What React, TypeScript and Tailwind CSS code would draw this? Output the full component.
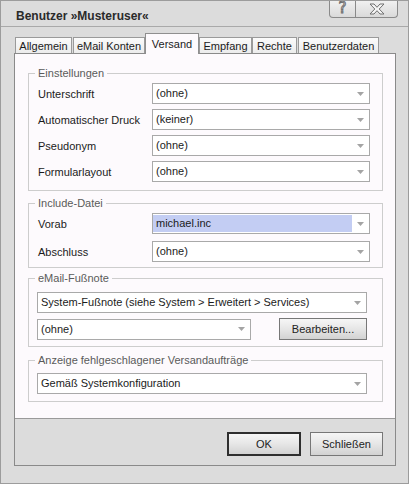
import React from "react";

function Arrow() {
  return (
    <svg width="7" height="4" viewBox="0 0 7 4" className="shrink-0">
      <path d="M0 0H7L3.5 4Z" fill="#a4a4a4" />
    </svg>
  );
}

function Select({ text, className = "", highlight = false }: { text: string; className?: string; highlight?: boolean }) {
  return (
    <div className={`h-[21px] border border-[#a9a9a9] bg-white flex items-center ${className}`}>
      {highlight ? (
        <div className="flex-1 h-[17px] bg-[#c3cdf3] flex items-center pl-[3px] whitespace-nowrap overflow-hidden">{text}</div>
      ) : (
        <div className="flex-1 flex items-center pl-[3px] whitespace-nowrap overflow-hidden">{text}</div>
      )}
      <div className="w-[17px] flex justify-center items-center">
        <Arrow />
      </div>
    </div>
  );
}

function Group({ label, className = "", children }: { label: string; className?: string; children: React.ReactNode }) {
  return (
    <div className={`relative border border-[#cdcdcd] ${className}`}>
      <span className="absolute left-[6px] top-[-8px] bg-[#fdfafd] px-[3px] leading-[14px] text-[#5a5a5a]">{label}</span>
      {children}
    </div>
  );
}

function Row({ label, value, highlight = false }: { label: string; value: string; highlight?: boolean }) {
  return (
    <div className="flex items-center">
      <div className="w-[114px] leading-[14px]">{label}</div>
      <Select text={value} highlight={highlight} className="w-[218px]" />
    </div>
  );
}

function Tab({ label, selected = false, className = "" }: { label: string; selected?: boolean; className?: string }) {
  if (selected) {
    return (
      <div
        className={`h-[21px] -mb-[1px] relative z-10 border-t border-l border-r border-[#8f8f8f] bg-[#fdfafd] flex items-start justify-center pt-[3px] leading-[14px] ${className}`}
      >
        {label}
      </div>
    );
  }
  return (
    <div
      className={`h-[16px] border-t border-l border-r border-[#9a9a9a] bg-gradient-to-b from-[#fbfbfb] to-[#ececec] flex items-center justify-center leading-[14px] ${className}`}
    >
      {label}
    </div>
  );
}

function Btn({ label, className = "", isDefault = false }: { label: string; className?: string; isDefault?: boolean }) {
  return (
    <div
      className={`flex items-center justify-center bg-gradient-to-b from-[#f6f6f6] via-[#e6e6e6] to-[#d2d2d2] text-[#222] ${
        isDefault ? "border-2 border-[#2e2e2e]" : "border border-[#777]"
      } ${className}`}
    >
      {label}
    </div>
  );
}

export default function App() {
  return (
    <div className="w-[409px] h-[484px] bg-[#dcdcdc] border border-[#9c9c9c] font-['Liberation_Sans',Arial,sans-serif] text-[11px] text-[#1b1b1b] flex flex-col overflow-hidden">
      {/* title bar */}
      <div className="h-[26px] border-b border-[#a9a9a9] flex items-start shrink-0">
        <div className="pl-[15px] pt-[8px] text-[12px] font-bold leading-[14px] text-[#2a2a2a]">Benutzer »Musteruser«</div>
        <div className="ml-auto mr-[10px] -mt-[1px] flex">
          <div className="w-[27px] h-[18px] border border-t-0 border-[#8a8a8a] rounded-bl-[4px] bg-gradient-to-b from-[#f2f2f2] to-[#dadada] flex items-center justify-center text-[15px] leading-none text-[#f4f4f4] [-webkit-text-stroke:1px_#6e6e6e] font-['DejaVu_Sans',sans-serif]">
            ?
          </div>
          <div className="w-[42px] h-[18px] border border-t-0 border-l-0 border-[#8a8a8a] rounded-br-[4px] bg-gradient-to-b from-[#f2f2f2] to-[#dadada] flex items-center justify-center">
            <svg width="16" height="12" viewBox="0 0 16 12">
              <path
                d="M1 1H5L8 4.3L11 1H15L10.2 6L15 11H11L8 7.7L5 11H1L5.8 6Z"
                fill="#f6f6f6"
                stroke="#707070"
                strokeWidth="1"
                strokeLinejoin="round"
              />
            </svg>
          </div>
        </div>
      </div>

      {/* tabs */}
      <div className="h-[26px] flex items-end pl-[14px] shrink-0">
        <Tab label="Allgemein" className="w-[57px]" />
        <Tab label="eMail Konten" className="w-[72px] ml-[1px]" />
        <Tab label="Versand" selected className="w-[54px]" />
        <Tab label="Empfang" className="w-[53px]" />
        <Tab label="Rechte" className="w-[45px]" />
        <Tab label="Benutzerdaten" className="w-[81px] ml-[1px]" />
      </div>

      {/* panel */}
      <div className="ml-[13px] mr-[12px] border border-[#8a8a8a] flex flex-col">
        <div className="h-[365px] bg-[#fdfafd] border-b border-[#9a9a9a] flex flex-col pl-[13px] pr-[12px]">
          <Group label="Einstellungen" className="mt-[19px] pt-[9px] pb-[8px] pl-[9px] flex flex-col gap-[5px]">
            <Row label="Unterschrift" value="(ohne)" />
            <Row label="Automatischer Druck" value="(keiner)" />
            <Row label="Pseudonym" value="(ohne)" />
            <Row label="Formularlayout" value="(ohne)" />
          </Group>
          <Group label="Include-Datei" className="mt-[12px] pt-[9px] pb-[5px] pl-[9px] flex flex-col gap-[7px]">
            <Row label="Vorab" value="michael.inc" highlight />
            <Row label="Abschluss" value="(ohne)" />
          </Group>
          <Group label="eMail-Fußnote" className="mt-[10px] pt-[13px] pb-[6px] pl-[8px] pr-[15px] flex flex-col gap-[5px]">
            <Select text="System-Fußnote (siehe System > Erweitert > Services)" />
            <div className="flex items-center">
              <Select text="(ohne)" className="w-[214px]" />
              <Btn label="Bearbeiten..." className="ml-auto w-[88px] h-[22px]" />
            </div>
          </Group>
          <Group label="Anzeige fehlgeschlagener Versandaufträge" className="mt-[13px] pt-[12px] pb-[7px] pl-[8px] pr-[15px]">
            <Select text="Gemäß Systemkonfiguration" />
          </Group>
        </div>
        <div className="h-[46px] flex justify-end items-start pt-[13px] pr-[12px] gap-[9px]">
          <Btn label="OK" isDefault className="w-[74px] h-[24px]" />
          <Btn label="Schließen" className="w-[73px] h-[24px]" />
        </div>
      </div>
    </div>
  );
}
